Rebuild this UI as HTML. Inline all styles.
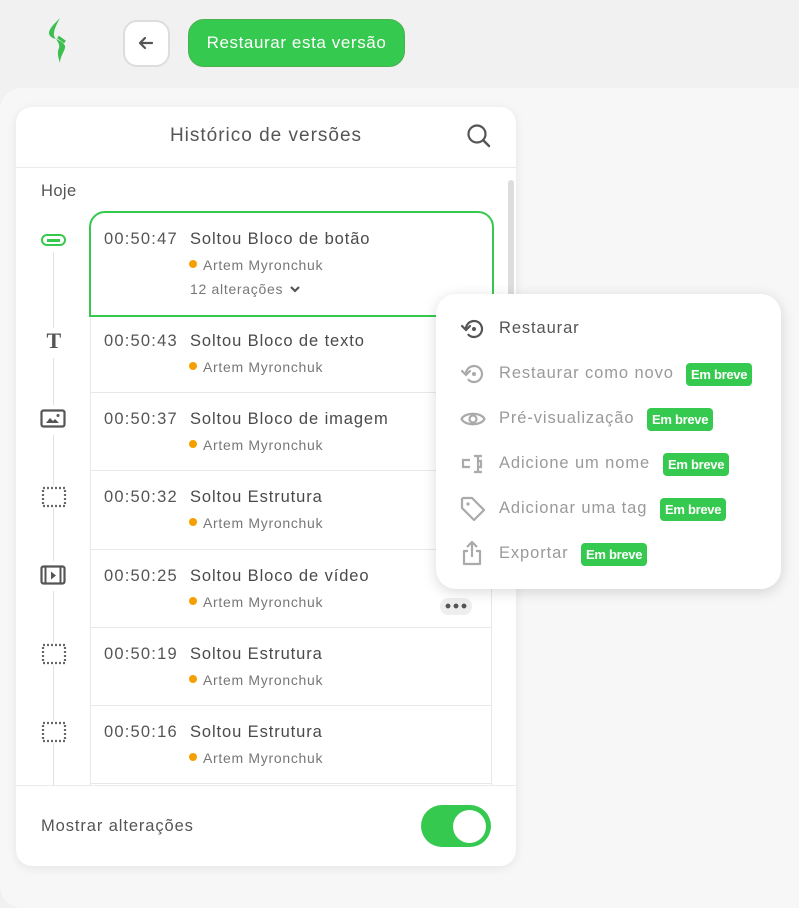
<!DOCTYPE html>
<html><head><meta charset="utf-8"><style>
*{box-sizing:border-box;margin:0;padding:0}
body{width:799px;height:882px;background:#f1f1f1;font-family:"Liberation Sans",sans-serif;color:#444;position:relative;overflow:hidden;letter-spacing:0.4px}
.abs{position:absolute}
svg{display:block}
.bg2{left:0;top:88px;width:820px;height:820px;background:#f7f7f7;border-radius:22px}
.panel{left:16px;top:107px;width:500px;height:759px;background:#fff;border-radius:16px;box-shadow:0 2px 10px rgba(0,0,0,.08);overflow:hidden}
.time{position:absolute;left:104px;font-size:16.5px;color:#555;letter-spacing:1.2px}
.ttl{position:absolute;left:190px;font-size:16.5px;color:#4a4a4a;letter-spacing:0.9px}
.auth{position:absolute;left:203px;font-size:14px;color:#777;letter-spacing:0.7px}
.dot{position:absolute;left:189px;width:8px;height:8px;border-radius:50%;background:#f5a000}
.sep{position:absolute;left:90px;width:402px;height:1px;background:#e8e8e8}
.menu{left:436px;top:294px;width:345px;height:295px;background:#fff;border-radius:20px;box-shadow:0 3px 14px rgba(0,0,0,.15)}
.mi{position:absolute;left:63px;font-size:16.5px;color:#9a9a9a;letter-spacing:0.9px}
.badge{position:absolute;background:#36c94f;color:#fff;font-weight:bold;font-size:13px;border-radius:4px;height:23px;line-height:23px;padding:0 5px;letter-spacing:-0.3px}
.ic{position:absolute;left:24px}
</style></head><body>
<div class="abs bg2"></div>
<svg class="abs" style="left:44px;top:17px" width="28" height="46" viewBox="0 0 28 46"><path d="M16 1 C9 8 5 12 5 16 C5 19 8 21 12 22 C8 18 10 12 16 1Z" fill="#3cbf4f"/><path d="M12 22 C17 24 22 27 21 31 C20 35 16 40 16 46 C14 40 13 35 15 31 C16 28 14 25 12 22Z" fill="#3cbf4f"/><path d="M14 20 L21 25" stroke="#3cbf4f" stroke-width="3"/></svg>
<div class="abs" style="left:123px;top:20px;width:47px;height:47px;border-radius:14px;background:#fff;border:2px solid #ddd"></div>
<svg class="abs" style="left:137px;top:35px" width="18" height="16" viewBox="0 0 18 16"><path d="M15 8H3M8 3L3 8l5 5" stroke="#555" stroke-width="2.2" fill="none" stroke-linecap="round" stroke-linejoin="round"/></svg>
<div class="abs" style="left:188px;top:19px;width:217px;height:48px;border-radius:16px;background:#36c94f;border:1px solid #4caf50;color:#fff;font-size:17px;line-height:46px;text-align:center;letter-spacing:0.6px">Restaurar esta versão</div>

<div class="abs panel">
<div class="abs" style="left:0;top:18px;width:500px;text-align:center;font-size:19px;color:#555;letter-spacing:1px">Histórico de versões</div>
<svg class="abs" style="left:450px;top:16px" width="26" height="26" viewBox="0 0 26 26"><circle cx="11" cy="11" r="8.5" stroke="#555" stroke-width="2.2" fill="none"/><path d="M17.5 17.5L23 23" stroke="#555" stroke-width="2.4" stroke-linecap="round"/></svg>
<div class="abs" style="left:0;top:60px;width:500px;height:1px;background:#ebebeb"></div>
<div class="abs" style="left:25px;top:75px;font-size:16.5px;color:#555">Hoje</div>
<div class="abs" style="left:492px;top:73px;width:6px;height:135px;border-radius:3px;background:#ddd"></div>
<div class="abs" style="left:0;top:678px;width:500px;height:1px;background:#ebebeb"></div>
<div class="abs" style="left:25px;top:710px;font-size:16.5px;color:#555;letter-spacing:0.9px">Mostrar alterações</div>
<div class="abs" style="left:405px;top:698px;width:70px;height:42px;border-radius:21px;background:#36c94f"></div>
<div class="abs" style="left:437px;top:703px;width:33px;height:33px;border-radius:50%;background:#fff"></div>
</div>

<!-- timeline -->
<div class="abs" style="left:53px;top:252px;width:1px;height:534px;background:#e2e2e2"></div>
<div class="abs" style="left:41px;top:234px;width:25px;height:12px;border:2.5px solid #36c94f;border-radius:6px;background:#fff"></div>
<div class="abs" style="left:47px;top:238.5px;width:13px;height:3px;background:#36c94f"></div>
<div class="abs" style="left:42px;top:328px;width:24px;height:30px;background:#fff;font-family:'Liberation Serif',serif;font-weight:bold;font-size:22px;color:#555;text-align:center">T</div>
<div class="abs" style="left:40px;top:405px;width:27px;height:30px;background:#fff"><svg width="27" height="22" viewBox="0 0 27 22" style="margin-top:4px"><rect x="1.5" y="1.5" width="23" height="16" rx="2" stroke="#555" stroke-width="2.2" fill="none"/><path d="M6 14l4-5 3 3 2-2 4 4z" fill="#555"/><circle cx="18" cy="6.5" r="1.5" fill="#555"/></svg></div>
<svg class="abs" style="left:41px;top:486px;background:#fff" width="26" height="22" viewBox="0 0 26 22"><rect x="2" y="2" width="22" height="18" stroke="#666" stroke-width="2.2" fill="none" stroke-dasharray="2 2"/></svg>
<div class="abs" style="left:40px;top:561px;width:27px;height:30px;background:#fff"><svg width="27" height="22" viewBox="0 0 27 22" style="margin-top:4px"><rect x="1.5" y="1.5" width="23" height="17" rx="2" stroke="#555" stroke-width="2.2" fill="none"/><path d="M5.5 2v17M20.5 2v17" stroke="#555" stroke-width="2"/><path d="M11 6.5v8l5-4z" fill="#555"/></svg></div>
<svg class="abs" style="left:41px;top:643px;background:#fff" width="26" height="22" viewBox="0 0 26 22"><rect x="2" y="2" width="22" height="18" stroke="#666" stroke-width="2.2" fill="none" stroke-dasharray="2 2"/></svg>
<svg class="abs" style="left:41px;top:721px;background:#fff" width="26" height="22" viewBox="0 0 26 22"><rect x="2" y="2" width="22" height="18" stroke="#666" stroke-width="2.2" fill="none" stroke-dasharray="2 2"/></svg>

<!-- list -->
<div class="abs" style="left:90px;top:316px;width:1px;height:470px;background:#e8e8e8"></div>
<div class="abs" style="left:491px;top:316px;width:1px;height:470px;background:#e8e8e8"></div>
<div class="abs" style="left:89px;top:211px;width:405px;height:106px;border:2px solid #36c94f;border-radius:16px 16px 0 0"></div>
<div class="time" style="top:230px">00:50:47</div><div class="ttl" style="top:230px">Soltou Bloco de botão</div>
<div class="dot" style="top:260px"></div><div class="auth" style="top:257px">Artem Myronchuk</div>
<div class="auth" style="left:190px;top:281px">12 alterações</div>
<svg class="abs" style="left:289px;top:285px" width="12" height="9" viewBox="0 0 12 9"><path d="M2 2l4 4 4-4" stroke="#555" stroke-width="2.2" fill="none"/></svg>

<div class="time" style="top:332px">00:50:43</div><div class="ttl" style="top:332px">Soltou Bloco de texto</div>
<div class="dot" style="top:362px"></div><div class="auth" style="top:359px">Artem Myronchuk</div>
<div class="sep" style="top:392px"></div>
<div class="time" style="top:410px">00:50:37</div><div class="ttl" style="top:410px">Soltou Bloco de imagem</div>
<div class="dot" style="top:440px"></div><div class="auth" style="top:437px">Artem Myronchuk</div>
<div class="sep" style="top:470px"></div>
<div class="time" style="top:488px">00:50:32</div><div class="ttl" style="top:488px">Soltou Estrutura</div>
<div class="dot" style="top:518px"></div><div class="auth" style="top:515px">Artem Myronchuk</div>
<div class="sep" style="top:549px"></div>
<div class="time" style="top:567px">00:50:25</div><div class="ttl" style="top:567px">Soltou Bloco de vídeo</div>
<div class="dot" style="top:597px"></div><div class="auth" style="top:594px">Artem Myronchuk</div>
<div class="abs" style="left:440px;top:598px;width:32px;height:17px;border-radius:9px;background:#eee"></div>
<div class="abs" style="left:445px;top:603px;width:22px;height:6px;background:radial-gradient(circle at 3px 3px,#555 2.2px,transparent 2.6px) 0 0/8px 6px repeat-x"></div>
<div class="sep" style="top:627px"></div>
<div class="time" style="top:645px">00:50:19</div><div class="ttl" style="top:645px">Soltou Estrutura</div>
<div class="dot" style="top:675px"></div><div class="auth" style="top:672px">Artem Myronchuk</div>
<div class="sep" style="top:705px"></div>
<div class="time" style="top:723px">00:50:16</div><div class="ttl" style="top:723px">Soltou Estrutura</div>
<div class="dot" style="top:753px"></div><div class="auth" style="top:750px">Artem Myronchuk</div>
<div class="sep" style="top:783px"></div>

<!-- menu -->
<div class="abs menu">
<svg class="ic" style="top:24px" width="26" height="22" viewBox="0 0 26 22"><path d="M6 11a8 8 0 1 1 2.5 5.8" stroke="#555" stroke-width="2.2" fill="none" stroke-linecap="round"/><path d="M2 8l4 4 4-4" stroke="#555" stroke-width="2.2" fill="none" stroke-linecap="round"/><circle cx="14" cy="11" r="2" fill="#555"/></svg>
<div class="mi" style="top:25px;color:#555">Restaurar</div>
<svg class="ic" style="top:69px" width="26" height="22" viewBox="0 0 26 22"><path d="M6 11a8 8 0 1 1 2.5 5.8" stroke="#aaa" stroke-width="2.2" fill="none" stroke-linecap="round"/><path d="M2 8l4 4 4-4" stroke="#aaa" stroke-width="2.2" fill="none" stroke-linecap="round"/><circle cx="14" cy="11" r="2" fill="#aaa"/></svg>
<div class="mi" style="top:70px">Restaurar como novo</div><div class="badge" style="left:250px;top:69px">Em breve</div>
<svg class="ic" style="top:114px" width="26" height="22" viewBox="0 0 26 22"><path d="M1.5 11C5 4 21 4 24.5 11 21 18 5 18 1.5 11z" stroke="#aaa" stroke-width="2.2" fill="none"/><circle cx="13" cy="11" r="3.5" stroke="#aaa" stroke-width="2.2" fill="none"/></svg>
<div class="mi" style="top:115px">Pré-visualização</div><div class="badge" style="left:211px;top:114px">Em breve</div>
<svg class="ic" style="top:159px" width="26" height="22" viewBox="0 0 26 22"><path d="M10 7H3v7h7M14 3h8M14 19h8M18 3v16M18 8h3v6h-3" stroke="#aaa" stroke-width="2.2" fill="none"/></svg>
<div class="mi" style="top:160px">Adicione um nome</div><div class="badge" style="left:227px;top:159px">Em breve</div>
<svg class="ic" style="top:202px" width="26" height="26" viewBox="0 0 26 26"><path d="M2 3v9l12 12 10-10L12 2H3z" stroke="#aaa" stroke-width="2.2" fill="none" stroke-linejoin="round"/><circle cx="8" cy="8" r="1.6" fill="#aaa"/></svg>
<div class="mi" style="top:205px">Adicionar uma tag</div><div class="badge" style="left:224px;top:204px">Em breve</div>
<svg class="ic" style="top:246px" width="26" height="26" viewBox="0 0 26 26"><path d="M8 11H4v13h16V11h-4M12 17V2M7 7l5-5 5 5" stroke="#aaa" stroke-width="2.2" fill="none" stroke-linejoin="round"/></svg>
<div class="mi" style="top:250px">Exportar</div><div class="badge" style="left:145px;top:249px">Em breve</div>
</div>
</body></html>
